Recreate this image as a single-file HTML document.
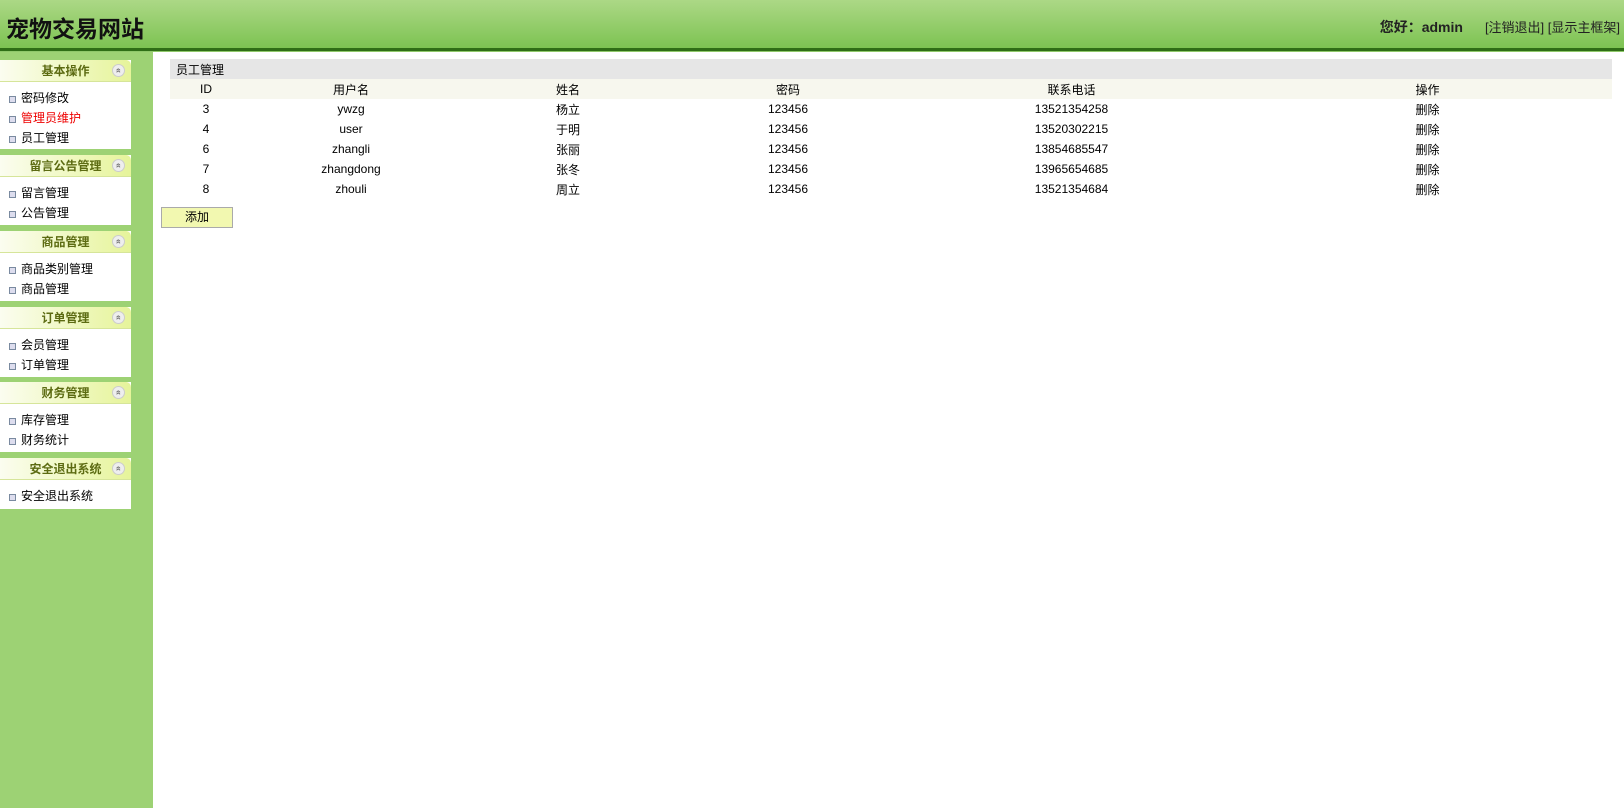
<!DOCTYPE html>
<html><head><meta charset="utf-8"><style>
*{margin:0;padding:0;box-sizing:border-box}
body{width:1624px;height:808px;overflow:hidden;background:#fff;font-family:"Liberation Sans","Noto Sans CJK SC",sans-serif;font-size:12px;color:#000;position:relative}
#hd{position:absolute;left:0;top:0;width:1624px;height:48px;background:linear-gradient(#acd886,#7dc352)}
#hd .t{position:absolute;left:6px;top:10px;font-size:23px;font-weight:bold;color:#111}
#hd .r{position:absolute;right:4px;top:17px;font-size:13px;color:#222}
#hd .r b{font-size:14px;margin-right:22px;color:#222}
#line{position:absolute;left:0;top:48px;width:1624px;height:3px;background:#2f6e16}
#line2{position:absolute;left:0;top:51px;width:1624px;height:1px;background:#8fc86a}
#sb{position:absolute;left:0;top:52px;width:153px;height:756px;background:#9dd274}
.g{position:absolute;left:0;width:131px;background:#fff}
.gh{height:22px;background:linear-gradient(90deg,#fbfdf0,#e6f49a);border-top-right-radius:5px;text-align:center;line-height:22px;font-weight:bold;color:#5c6b12;font-size:12px;position:relative;border-bottom:1px solid #d6e59a}
.gh i{position:absolute;right:6px;top:4px;width:13px;height:13px;border-radius:50%;background:#eee;border:1px solid #ccc;font-style:normal;font-size:9px;line-height:11px;color:#777;text-align:center;transform:rotate(90deg)}
.it{height:20px;line-height:20px;padding-left:21px;position:relative}
.it:before{content:"";position:absolute;left:9px;top:8px;width:5px;height:5px;border:1px solid #7a8aa0;background:#dde}
.g ul{padding-top:6px;list-style:none}
.red{color:#e00}
table{position:absolute;left:170px;top:59px;width:1442px;border-collapse:collapse}
td{height:20px;text-align:center;padding:0}
.tt td{background:#e6e6e6;text-align:left;padding-left:6px}
.th td{background:#f7f7ee}
#add{position:absolute;left:161px;top:207px;width:72px;height:21px;background:#f2f8b0;border:1px solid #aaa;text-align:center;line-height:19px}
</style></head><body>
<div id="hd"><div class="t">宠物交易网站</div><div class="r"><b>您好：admin</b>[注销退出] [显示主框架]</div></div>
<div id="line"></div><div id="line2"></div>
<div id="sb">
<div class="g" style="top:8px;height:89px"><div class="gh">基本操作<i>«</i></div><ul><li class="it">密码修改</li><li class="it red">管理员维护</li><li class="it">员工管理</li></ul></div>
<div class="g" style="top:103px;height:70px"><div class="gh">留言公告管理<i>«</i></div><ul><li class="it">留言管理</li><li class="it">公告管理</li></ul></div>
<div class="g" style="top:179px;height:70px"><div class="gh">商品管理<i>«</i></div><ul><li class="it">商品类别管理</li><li class="it">商品管理</li></ul></div>
<div class="g" style="top:255px;height:70px"><div class="gh">订单管理<i>«</i></div><ul><li class="it">会员管理</li><li class="it">订单管理</li></ul></div>
<div class="g" style="top:330px;height:70px"><div class="gh">财务管理<i>«</i></div><ul><li class="it">库存管理</li><li class="it">财务统计</li></ul></div>
<div class="g" style="top:406px;height:51px"><div class="gh">安全退出系统<i>«</i></div><ul><li class="it">安全退出系统</li></ul></div>
</div>
<table>
<tr class="tt"><td colspan="6">员工管理</td></tr>
<tr class="th"><td style="width:72px">ID</td><td style="width:218px">用户名</td><td style="width:216px">姓名</td><td style="width:224px">密码</td><td style="width:343px">联系电话</td><td>操作</td></tr>
<tr><td>3</td><td>ywzg</td><td>杨立</td><td>123456</td><td>13521354258</td><td>删除</td></tr>
<tr><td>4</td><td>user</td><td>于明</td><td>123456</td><td>13520302215</td><td>删除</td></tr>
<tr><td>6</td><td>zhangli</td><td>张丽</td><td>123456</td><td>13854685547</td><td>删除</td></tr>
<tr><td>7</td><td>zhangdong</td><td>张冬</td><td>123456</td><td>13965654685</td><td>删除</td></tr>
<tr><td>8</td><td>zhouli</td><td>周立</td><td>123456</td><td>13521354684</td><td>删除</td></tr>
</table>
<div id="add">添加</div>
</body></html>
